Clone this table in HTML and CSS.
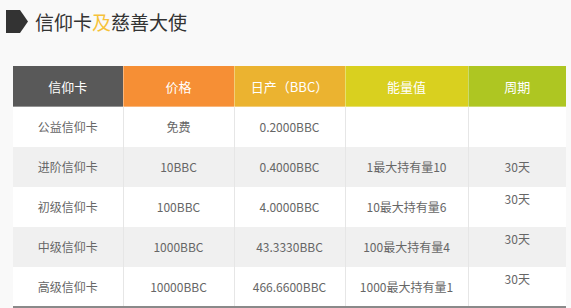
FILE: index.html
```html
<!DOCTYPE html>
<html lang="zh">
<head>
<meta charset="utf-8">
<link rel="stylesheet" href="styles.css">
</head>
<body>
<div class="page">
  <h2 class="title">
    <svg class="title-icon" width="23" height="24" viewBox="0 0 23 24"><polygon points="0,0 14,0 22,11.5 14,23 0,23" fill="#333"/></svg>
    <span>信仰卡<em>及</em>慈善大使</span>
  </h2>
  <table class="cards">
    <colgroup>
      <col class="c1"><col class="c2"><col class="c3"><col class="c4"><col class="c5">
    </colgroup>
    <thead>
      <tr>
        <th class="h1">信仰卡</th>
        <th class="h2">价格</th>
        <th class="h3">日产（BBC）</th>
        <th class="h4">能量值</th>
        <th class="h5">周期</th>
      </tr>
    </thead>
    <tbody>
      <tr><td>公益信仰卡</td><td>免费</td><td>0.2000BBC</td><td></td><td></td></tr>
      <tr><td>进阶信仰卡</td><td>10BBC</td><td>0.4000BBC</td><td>1最大持有量10</td><td>30天</td></tr>
      <tr><td>初级信仰卡</td><td>100BBC</td><td>4.0000BBC</td><td>10最大持有量6</td><td class="top">30天</td></tr>
      <tr><td>中级信仰卡</td><td>1000BBC</td><td>43.3330BBC</td><td>100最大持有量4</td><td class="top">30天</td></tr>
      <tr><td>高级信仰卡</td><td>10000BBC</td><td>466.6600BBC</td><td>1000最大持有量1</td><td class="top">30天</td></tr>
    </tbody>
  </table>
</div>
</body>
</html>
```

FILE: styles.css
```css
html, body {
  margin: 0;
  padding: 0;
  background: #f9f9f9;
  font-family: "Noto Sans CJK SC", "Noto Sans", sans-serif;
}
.page {
  padding: 10px 5px 0 6px;
}
.title {
  display: flex;
  align-items: center;
  gap: 6px;
  margin: 0;
  height: 23px;
  font-size: 19px;
  font-weight: 400;
  color: #333;
  line-height: 23px;
}
.title-icon {
  display: block;
  flex: none;
}
.title em {
  font-style: normal;
  color: #f6c23a;
}
.cards {
  margin: 33px 0 0 7px;
  border-collapse: collapse;
  table-layout: fixed;
  width: 553px;
  font-size: 12px;
}
.c1 { width: 110px; }
.c2 { width: 111px; }
.c3 { width: 111px; }
.c4 { width: 123px; }
.c5 { width: 98px; }
.cards th {
  height: 40px;
  padding: 0;
  color: #fff;
  font-weight: 400;
  font-size: 13px;
  border-right: 1px solid rgba(255,255,255,0.35);
  border-bottom: 1px solid rgba(255,255,255,0.35);
  text-align: center;
}
.cards th:last-child { border-right: 0; }
.h1 { background: #595959; }
.h2 { background: #f68f35; }
.h3 { background: #ebb330; }
.h4 { background: #d9d01f; }
.h5 { background: #aec622; }
.cards td {
  height: 40px;
  padding: 0;
  box-sizing: border-box;
  text-align: center;
  color: #666;
  border-right: 1px solid #e6e6e6;
  background: #fff;
}
.cards td:last-child { border-right: 0; }
.cards tbody tr:nth-child(even) td { background: #f0f0f0; }
.cards tbody tr:last-child td { border-bottom: 2px solid #8a8a8a; }
.cards td.top {
  vertical-align: top;
  padding-top: 3px;
}
```
